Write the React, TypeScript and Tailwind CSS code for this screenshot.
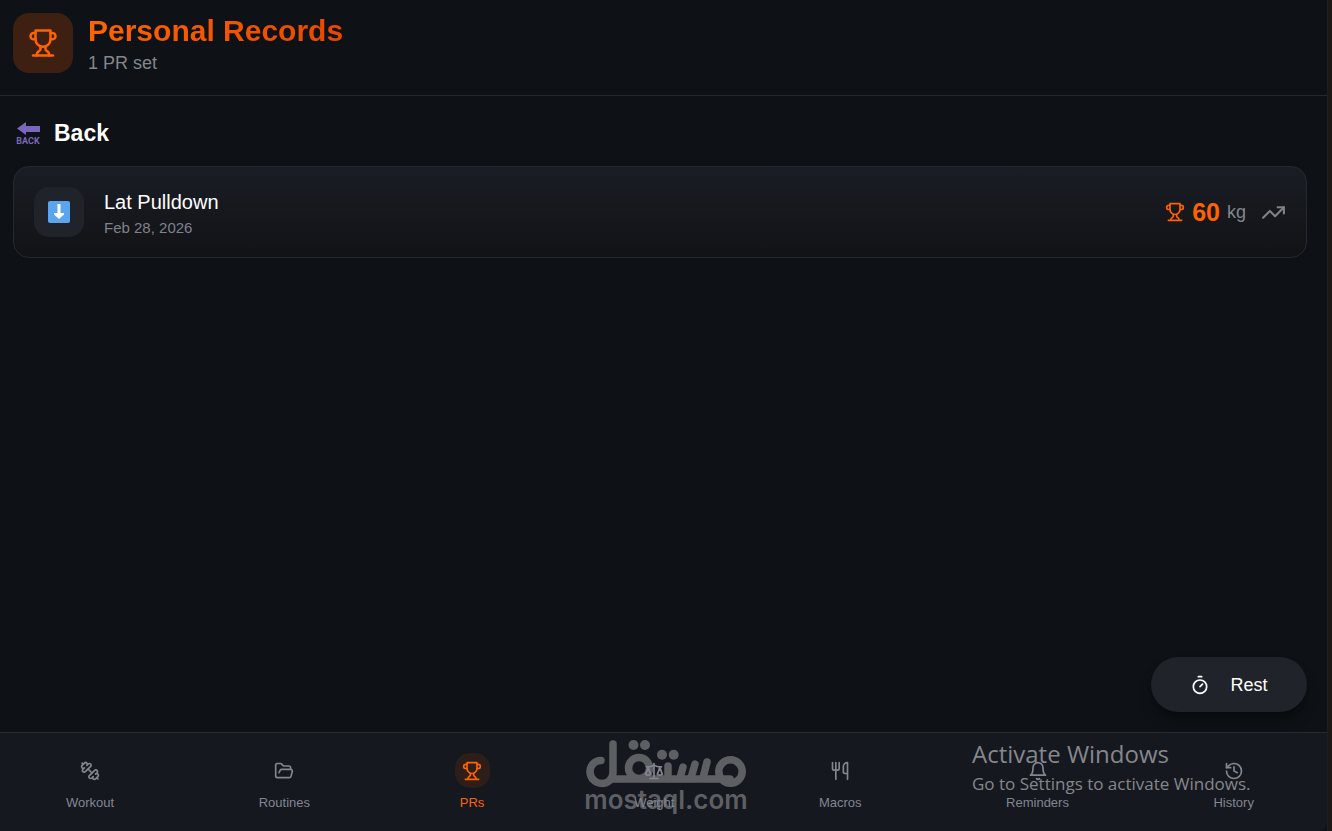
import React from "react";
import { FolderOpen, History, Timer, TrendingUp, Utensils } from "lucide-react";

type IconProps = { className?: string };

const Icon = ({ paths, className }: IconProps & { paths: string[] }) => (
  <svg
    viewBox="0 0 24 24"
    className={className}
    fill="none"
    stroke="currentColor"
    strokeWidth="2"
    strokeLinecap="round"
    strokeLinejoin="round"
    aria-hidden="true"
  >
    {paths.map((d) => (
      <path key={d} d={d} />
    ))}
  </svg>
);

const Trophy = ({ className }: IconProps) => (
  <Icon
    className={className}
    paths={[
      "M6 9H4.5a2.5 2.5 0 0 1 0-5H6",
      "M18 9h1.5a2.5 2.5 0 0 0 0-5H18",
      "M4 22h16",
      "M10 14.66V17c0 .55-.47.98-.97 1.21C7.85 18.75 7 20.24 7 22",
      "M14 14.66V17c0 .55.47.98.97 1.21C16.15 18.75 17 20.24 17 22",
      "M18 2H6v7a6 6 0 0 0 12 0V2Z",
    ]}
  />
);

const Dumbbell = ({ className }: IconProps) => (
  <Icon
    className={className}
    paths={[
      "M14.4 14.4 9.6 9.6",
      "M18.657 21.485a2 2 0 1 1-2.829-2.828l-1.767 1.768a2 2 0 1 1-2.829-2.829l6.364-6.364a2 2 0 1 1 2.829 2.829l-1.768 1.767a2 2 0 1 1 2.828 2.829z",
      "m21.5 21.5-1.4-1.4",
      "M3.9 3.9 2.5 2.5",
      "M6.404 12.768a2 2 0 1 1-2.829-2.829l1.768-1.767a2 2 0 1 1-2.828-2.829l2.828-2.828a2 2 0 1 1 2.829 2.828l1.767-1.768a2 2 0 1 1 2.829 2.829z",
    ]}
  />
);

const Scale = ({ className }: IconProps) => (
  <Icon
    className={className}
    paths={[
      "m16 16 3-8 3 8c-.87.65-1.92 1-3 1s-2.13-.35-3-1Z",
      "m2 16 3-8 3 8c-.87.65-1.92 1-3 1s-2.13-.35-3-1Z",
      "M7 21h10",
      "M12 3v18",
      "M3 7h2c2 0 5-1 7-2 2 1 5 2 7 2h2",
    ]}
  />
);

const Bell = ({ className }: IconProps) => (
  <Icon
    className={className}
    paths={[
      "M6 8a6 6 0 0 1 12 0c0 7 3 9 3 9H3s3-2 3-9",
      "M10.3 21a1.94 1.94 0 0 0 3.4 0",
    ]}
  />
);

const tabs = [
  { label: "Workout", icon: Dumbbell },
  { label: "Routines", icon: FolderOpen },
  { label: "PRs", icon: Trophy, active: true },
  { label: "Weight", icon: Scale },
  { label: "Macros", icon: Utensils },
  { label: "Reminders", icon: Bell },
  { label: "History", icon: History },
];

const records = [
  { name: "Lat Pulldown", date: "Feb 28, 2026", weight: 60, unit: "kg" },
];

const BackGlyph = () => (
  <svg viewBox="0 0 24 24" className="w-6 h-6 overflow-visible" aria-hidden="true">
    <path d="M1 7.5L10 1V5H24V11H10V14Z" fill="#7b66bd" />
    <text
      x="12"
      y="23"
      textAnchor="middle"
      fill="#7b66bd"
      fontSize="9"
      fontWeight="700"
      fontFamily="Roboto, sans-serif"
    >
      BACK
    </text>
  </svg>
);

const DownGlyph = () => (
  <svg viewBox="0 0 24 24" className="w-6 h-6" aria-hidden="true">
    <rect x="1" y="1" width="22" height="22" rx="2" fill="#5ba4ee" />
    <path d="M10.5 4h3v9h3.5v1.5L12 19L7 14.5V13h3.5z" fill="#fff" />
  </svg>
);

const Watermark = () => (
  <div className="absolute left-[586px] top-1 w-40 flex flex-col items-center text-[#5e5f63] pointer-events-none">
    <svg
      viewBox="0 0 160 52"
      className="w-40 h-[52px] overflow-visible"
      aria-hidden="true"
    >
      <g
        fill="none"
        stroke="currentColor"
        strokeWidth="7.5"
        strokeLinecap="round"
        strokeLinejoin="round"
      >
        <path d="M15 23.5C8 23.5 4 29 4 35A12 12 0 0 0 16 46.5C22 46.5 27 42 27 35V7" />
        <path d="M25 42H144" />
        <circle cx="53" cy="31" r="10.5" />
        <circle cx="144.5" cy="34.5" r="11.7" />
        <path d="M82 29V41M97 30L94 41M109 27L105 41M121 25L117 41" />
      </g>
      <g fill="currentColor">
        <circle cx="47.5" cy="8" r="5" />
        <circle cx="59" cy="8" r="5" />
        <circle cx="76" cy="17.7" r="5" />
        <circle cx="87.7" cy="17.7" r="5" />
      </g>
    </svg>
    <p className="-mt-1 font-['Inter',sans-serif] text-[26px] leading-[30px] font-semibold">
      mostaql.com
    </p>
  </div>
);

const App = () => {
  return (
    <div className="min-h-screen flex bg-[#1c1816] font-['Liberation_Sans',Arial,sans-serif]">
      <div className="flex-1 flex flex-col border-r border-[#1b1e25] bg-[#0e1115]">
        <header className="flex items-center gap-[15px] pl-[13px] pr-5 pt-[11px] pb-5 border-b border-[#26282d]">
          <div className="flex items-center justify-center w-15 h-15 rounded-2xl bg-[#3d2012]">
            <Trophy className="w-[30px] h-[30px] text-[#ff6200]" />
          </div>
          <div>
            <h1 className="w-fit text-[30px] leading-10 font-bold text-transparent bg-clip-text bg-linear-135 from-[#ff6600] to-[#e64600]">
              Personal Records
            </h1>
            <p className="text-lg leading-6 text-[#83868c]">1 PR set</p>
          </div>
        </header>

        <main className="flex-1 flex flex-col pl-[13px] pr-5 pt-5 pb-5">
          <h2 className="flex items-center gap-[14px] pl-[3px] mb-4 text-[23px] leading-[34px] font-bold text-white">
            <BackGlyph />
            Back
          </h2>

          <ul>
            {records.map((record) => (
              <li
                key={record.name}
                className="flex items-center justify-between px-5 py-[17px] rounded-2xl border border-[#25282e] bg-linear-to-b from-[#1a1d25] to-[#121316]"
              >
                <div className="flex items-center gap-5">
                  <div className="flex items-center justify-center w-[50px] h-[50px] rounded-[15px] bg-[#20232a]">
                    <DownGlyph />
                  </div>
                  <div className="pt-1">
                    <h3 className="text-xl leading-7 text-white">{record.name}</h3>
                    <p className="text-[15px] leading-6 text-[#7f828a]">
                      {record.date}
                    </p>
                  </div>
                </div>
                <div className="flex items-center gap-[7px]">
                  <Trophy className="w-5 h-5 text-[#ff6200]" />
                  <span className="text-[25px] leading-8 font-bold text-[#ff6200]">
                    {record.weight}
                  </span>
                  <span className="text-lg text-[#83868c]">{record.unit}</span>
                  <TrendingUp className="w-[25px] h-[25px] ml-2 text-[#7f8288]" />
                </div>
              </li>
            ))}
          </ul>

          <button
            type="button"
            className="flex items-center justify-center gap-5 w-[156px] h-[55px] mt-auto self-end rounded-full bg-[#20232a] text-lg text-white shadow-lg shadow-black/30"
          >
            <Timer className="w-5 h-5" />
            Rest
          </button>
        </main>

        <nav className="relative flex justify-between pl-[66px] pr-[73px] pt-5 pb-[19px] border-t border-[#282a2f] rounded-br-lg bg-[#15181f]">
          <Watermark />
          {tabs.map(({ label, icon: TabIcon, active }) => (
            <a
              key={label}
              href="#"
              className={`relative flex flex-col items-center gap-[6px] text-[13px] leading-[18px] ${
                active ? "text-[#ff6200]" : "text-[#83868f]"
              }`}
            >
              <span
                className={`flex items-center justify-center w-[35px] h-[35px] rounded-[15px] ${
                  active ? "bg-[#2e1e19]" : ""
                }`}
              >
                <TabIcon className="w-5 h-5" />
              </span>
              {label}
            </a>
          ))}

          <div className="absolute right-[71px] top-[3px] w-[284px] font-['Open_Sans',sans-serif] text-[#85878b] whitespace-nowrap pointer-events-none">
            <p className="text-2xl leading-9">Activate Windows</p>
            <p className="text-[17px] leading-6">
              Go to Settings to activate Windows.
            </p>
          </div>
        </nav>
      </div>
      <div className="w-1" />
    </div>
  );
};

export default App;
